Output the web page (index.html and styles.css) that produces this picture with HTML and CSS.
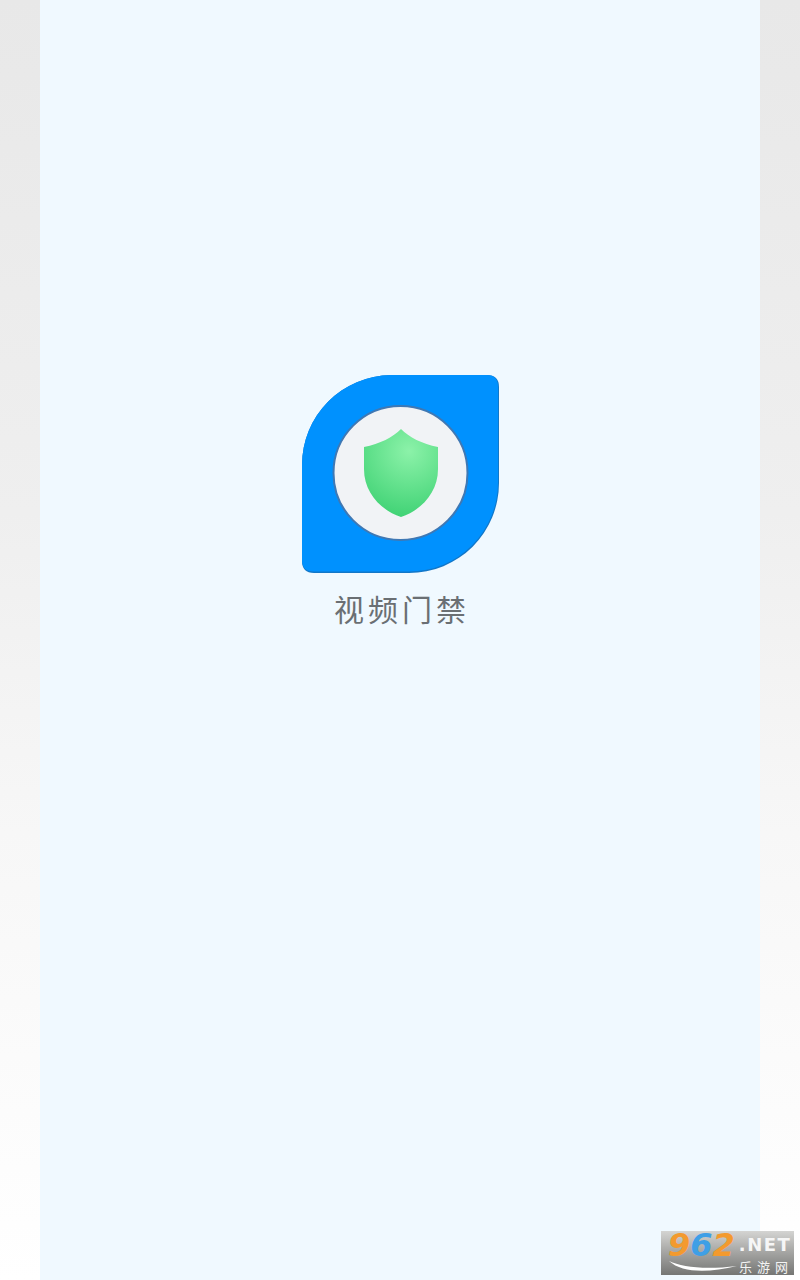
FILE: index.html
```html
<!DOCTYPE html>
<html lang="zh">
<head>
<meta charset="utf-8">
<title>视频门禁</title>
<link rel="stylesheet" href="styles.css">
</head>
<body>
<main class="panel">
  <svg class="logo" viewBox="0 0 197 198" width="197" height="198" aria-hidden="true">
    <defs>
      <radialGradient id="sh" gradientUnits="userSpaceOnUse" cx="107" cy="76" r="68">
        <stop offset="0" stop-color="#8cf2a9"/>
        <stop offset="1" stop-color="#3fd274"/>
      </radialGradient>
    </defs>
    <path d="M89 0H185Q197 0 197 12V108A90 90 0 0 1 107 198H12Q0 198 0 186V90A90 90 0 0 1 89 0Z" fill="#1277c8"/>
    <path d="M89 0H185Q196 0 196 12V107A89 89 0 0 1 107 196.500H12Q0 196.500 0 185V90A90 90 0 0 1 89 0Z" fill="#0091fe"/>
    <circle cx="98.500" cy="98" r="67" fill="#f1f3f6" stroke="#3f78b4" stroke-width="2"/>
    <path d="M99 54C91 62 78 69 62 72V94C62 117 78 135 99 142C120 135 136 117 136 94V72C120 69 107 62 99 54Z" fill="url(#sh)"/>
  </svg>
  <h1 class="title">视频门禁</h1>
</main>
<div class="mark">
  <div class="mark-top"><span class="mark-num"><span class="o">9</span><span class="b">6</span><span class="o">2</span></span><span class="mark-net">.NET</span></div>
  <div class="mark-bottom">
    <svg class="swoosh" viewBox="0 0 70 12" width="70" height="12" aria-hidden="true"><path d="M1 0C14 6 36 9 69 5C40 12 14 12 1 0Z" fill="#fff"/></svg>
    <span class="mark-cn">乐游网</span>
  </div>
</div>
</body>
</html>
```
FILE: styles.css
```css
html, body {
  margin: 0;
  height: 1280px;
  overflow: hidden;
}
body {
  position: relative;
  display: flex;
  justify-content: center;
  background: linear-gradient(180deg, #e8e8e8 0%, #efefef 40%, #f7f7f7 65%, #fff 100%);
}
.panel {
  box-sizing: border-box;
  width: 720px;
  height: 1280px;
  padding-top: 375px;
  display: flex;
  flex-direction: column;
  align-items: center;
  background: #f0f9ff;
}
.logo {
  display: block;
  flex: none;
}
.title {
  margin: 17px -4px 0 0;
  font: 400 30px/36px "Noto Sans CJK SC", sans-serif;
  letter-spacing: 4px;
  color: #6a6f73;
}
.mark {
  position: absolute;
  left: 661px;
  top: 1231px;
  box-sizing: border-box;
  width: 133px;
  height: 44px;
  padding: 0 1px 0 7px;
  display: flex;
  flex-direction: column;
  background: linear-gradient(180deg, #d4d4d2 0%, #a8a8a6 45%, #757674 100%);
}
.mark-top {
  display: flex;
  align-items: flex-start;
  height: 29px;
}
.mark-num {
  font: italic 700 32px/29px "DejaVu Sans", sans-serif;
}
.o { color: #f39a2e; }
.b { color: #3f9fe6; }
.mark-net {
  margin: 5px 0 0 4px;
  font: 700 18px/18px "DejaVu Sans", sans-serif;
  letter-spacing: 1.5px;
  color: #f6f6f6;
}
.mark-bottom {
  display: flex;
  align-items: center;
  gap: 1px;
}
.swoosh { flex: none; }
.mark-cn {
  font: 400 13px/14px "Noto Sans CJK SC", sans-serif;
  letter-spacing: 5px;
  color: #f4f4f4;
}
```
